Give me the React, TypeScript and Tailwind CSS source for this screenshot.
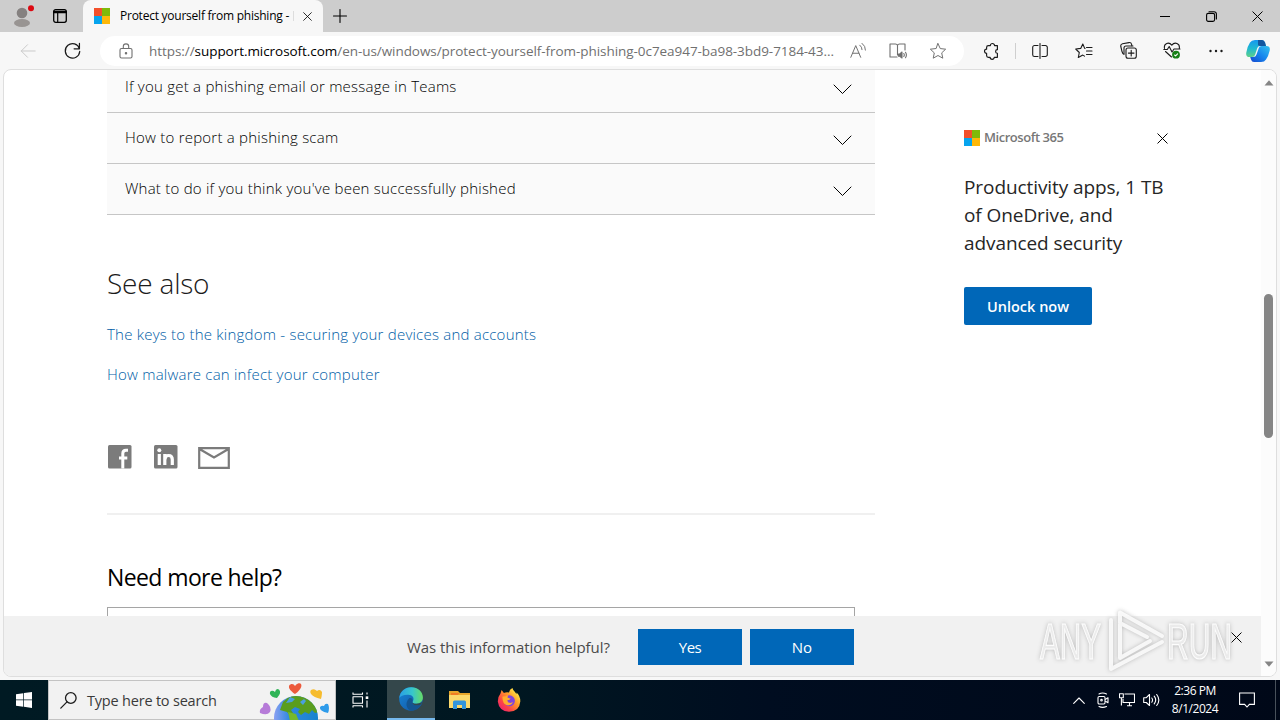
import React from "react";

type IconProps = { box?: string; className?: string; children: React.ReactNode };

function Icon({ box = "0 0 20 20", className = "size-5", children }: IconProps) {
  return (
    <svg
      viewBox={box}
      className={`shrink-0 ${className}`}
      fill="none"
      stroke="currentColor"
      strokeWidth="1.1"
      strokeLinecap="round"
      strokeLinejoin="round"
    >
      {children}
    </svg>
  );
}

function Slot({ className = "w-11", children }: { className?: string; children: React.ReactNode }) {
  return <div className={`flex h-full shrink-0 items-center justify-center ${className}`}>{children}</div>;
}

function MsLogo({ className = "size-4" }: { className?: string }) {
  return (
    <div className={`grid shrink-0 grid-cols-2 ${className}`}>
      <div className="bg-[#f3502b]" />
      <div className="bg-[#7fba0a]" />
      <div className="bg-[#06a4ee]" />
      <div className="bg-[#fdb80a]" />
    </div>
  );
}

function Close({ className = "size-[11px]" }: { className?: string }) {
  return (
    <Icon box="0 0 11 11" className={className}>
      <path d="M.8.8l9.4 9.4M10.2.8L.8 10.2" strokeWidth="1" />
    </Icon>
  );
}

function TabStrip() {
  return (
    <div className="flex h-8 shrink-0 items-center bg-[#cdcdcd] text-black">
      <Slot>
        <Icon box="0 0 24 24" className="mb-px size-6">
          <g stroke="none">
            <circle cx="12" cy="9" r="5.3" fill="#858180" />
            <ellipse cx="12" cy="19" rx="8" ry="4" fill="#989492" />
            <circle cx="21" cy="4.3" r="3" fill="#dc0912" />
          </g>
        </Icon>
      </Slot>
      <Slot className="w-8">
        <Icon box="0 0 14 14" className="size-[14px]">
          <rect x=".7" y=".7" width="12.6" height="12.6" rx="2" strokeWidth="1.3" />
          <path d="M1 3h12" strokeWidth="2.4" />
          <path d="M4.7 4v9" strokeWidth="1.2" />
        </Icon>
      </Slot>
      <div className="ml-[7px] flex h-8 w-[240px] items-center rounded-t-lg bg-[#f7f7f7] pl-[11px]">
        <MsLogo />
        <div className="ml-[10px] flex w-[174px] items-center justify-between text-[12px] tracking-[-0.24px] whitespace-nowrap">
          <span>Protect yourself from phishing -</span>
          <span className="h-[10px] w-px bg-[#dddddd]" />
        </div>
        <Slot className="w-[26px]">
          <Close className="size-[9px]" />
        </Slot>
      </div>
      <Slot className="w-[34px]">
        <Icon box="0 0 14 14" className="size-[14px]">
          <path d="M7 .5v13M.5 7h13" />
        </Icon>
      </Slot>
      <div className="ml-auto flex h-full">
        <Slot className="w-[46px]">
          <div className="h-px w-[10px] bg-black" />
        </Slot>
        <Slot className="w-[46px]">
          <Icon box="0 0 11 11" className="size-[11px]">
            <rect x=".6" y="2.4" width="8" height="8" rx="1.6" />
            <path d="M3 .7h5a2.4 2.4 0 0 1 2.4 2.4V8" />
          </Icon>
        </Slot>
        <Slot className="w-[46px]">
          <Close />
        </Slot>
      </div>
    </div>
  );
}

function Toolbar() {
  return (
    <div className="flex h-[37px] shrink-0 items-center pl-[6px] text-[#1b1b1b]">
      <Slot>
        <Icon className="size-[18px] text-[#c9c9c9]">
          <path d="M18 10H2.5M9.5 3L2.5 10l7 7" />
        </Icon>
      </Slot>
      <Slot>
        <Icon className="size-[19px]">
          <path d="M17.3 8.2A7.6 7.6 0 1 0 17.6 11M17.3 2.6v5.6h-5.6" strokeWidth="1.3" />
        </Icon>
      </Slot>
      <div className="ml-[6px] flex h-[30px] w-[864px] shrink-0 items-center rounded-full bg-white text-[#707070]">
        <Slot className="ml-3 w-7">
          <Icon box="0 0 14 16" className="h-4 w-[14px]">
            <rect x="1" y="5.5" width="12" height="9.5" rx="1.5" />
            <path d="M4.3 5.3V3.6a2.7 2.7 0 0 1 5.4 0v1.7" />
            <circle cx="7" cy="10.2" r=".7" fill="currentColor" />
          </Icon>
        </Slot>
        <div className="ml-[9px] w-[689px] pt-px text-[13.5px] tracking-[-0.055px] whitespace-nowrap">
          https://<span className="text-black">support.microsoft.com</span>
          /en-us/windows/protect-yourself-from-phishing-0c7ea947-ba98-3bd9-7184-43...
        </div>
        <Slot className="w-10">
          <Icon className="size-[18px]">
            <path d="M2 17L7.5 4 13 17M4 12.5h7M12 3.5q2.5 2 2.5 5M14.5 1.5q4 3 3.8 7.5" />
          </Icon>
        </Slot>
        <Slot className="w-10">
          <Icon box="0 0 18 16" className="h-4 w-[18px]">
            <path d="M8.5 12V2.2Q8 1 6.5 1H1v13h7M8.5 2.2Q9 1 10.5 1H16v6" />
            <path d="M9.5 11h1.3L13 9v6l-2.2-1.8H9.5z" fill="currentColor" />
            <path d="M14.8 10.5q1 1.5 0 3M16.5 9.3q1.8 2.7 0 5.4" />
          </Icon>
        </Slot>
        <Slot className="w-10">
          <Icon className="size-[18px]">
            <path d="M10 1.8l2.5 5.5 6 .7-4.4 4.1 1.2 5.9-5.3-3-5.3 3 1.2-5.9L1.5 8l6-.7z" />
          </Icon>
        </Slot>
      </div>
      <Slot className="ml-2 w-10">
        <Icon className="size-[18px]">
          <path
            d="M6 4h2.2a2.3 2.3 0 0 1 4.6 0H16v4.5a2 2 0 0 0 0 4V17h-3.5a2.3 2.3 0 0 1-4.6 0H6a2 2 0 0 1-2-2v-2.4a2.3 2.3 0 0 1 0-4.6V6a2 2 0 0 1 2-2z"
            strokeWidth="1.3"
          />
        </Icon>
      </Slot>
      <div className="ml-[3px] h-4 w-px shrink-0 bg-[#cfcfcf]" />
      <Slot className="ml-0.5 w-11">
        <Icon box="0 0 16 16" className="size-4">
          <path d="M6 2.5H2.5A1.8 1.8 0 0 0 .7 4.3v7.4a1.8 1.8 0 0 0 1.8 1.8H6M10 2.5h3.5a1.8 1.8 0 0 1 1.8 1.8v7.4a1.8 1.8 0 0 1-1.8 1.8H10M8 .5v15" />
        </Icon>
      </Slot>
      <Slot>
        <Icon box="0 0 18 16" className="h-4 w-[18px]">
          <path d="M10 5.4H9.7L7.8 1 5.7 5.4l-5 .6 3.6 3.5-1 5 4.5-2.4 1.7 1M11.5 4.5h5.5M11.5 8h5.5M11.5 11.5h5.5" />
        </Icon>
      </Slot>
      <Slot>
        <Icon box="0 0 17 17" className="size-[17px]">
          <rect x="6" y="6" width="10.3" height="10.3" rx="2" />
          <path d="M11.2 8.3v5.6M8.4 11.1H14M4 12.2C3 12 2.4 11 2 9.500L.8 4.5C.5 3 1.300 2.100 2.500 1.800l6.500-1.200c1.500-.2 2.300.5 2.600 1.700l.3 1.500" />
          <path d="M4 12V6q0-2 2-2h7" />
        </Icon>
      </Slot>
      <Slot>
        <Icon box="0 0 18 17" className="h-[17px] w-[18px]">
          <path d="M1.500 6.500C.5 1 6-.5 8.800 3.200 11.600-.5 17.200 1 16.300 6.500M.8 7.500h3.500L6.200 4.500 9 10l2-3h6M2.500 9.500L8.500 15" />
          <circle cx="13" cy="12.700" r="3.900" fill="#168016" stroke="none" />
          <path d="M11.600 13l1 .9 2-2" stroke="white" />
        </Icon>
      </Slot>
      <Slot>
        <Icon box="0 0 14 4" className="h-1 w-[14px]">
          <g fill="currentColor" stroke="none">
            <circle cx="1.500" cy="2" r="1.200" />
            <circle cx="7" cy="2" r="1.200" />
            <circle cx="12.500" cy="2" r="1.200" />
          </g>
        </Icon>
      </Slot>
      <Slot className="w-10">
        <Icon box="0 0 24 24" className="size-6">
          <defs>
            <linearGradient id="cpA" x1="0" y1="0" x2="0" y2="1">
              <stop offset="0" stopColor="#1697f0" />
              <stop offset=".5" stopColor="#20b9d0" />
              <stop offset="1" stopColor="#5fd089" />
            </linearGradient>
            <linearGradient id="cpB" x1="1" y1="0" x2="0" y2="1">
              <stop offset="0" stopColor="#35c3ee" />
              <stop offset=".5" stopColor="#1687ee" />
              <stop offset="1" stopColor="#1547cf" />
            </linearGradient>
          </defs>
          <g stroke="none">
            <path d="M9 1h7q2.200 0 3 2.500l1 3.500h-6q-2 0-2.700 2L9 16q-.8 2-3 2H3.500Q-.5 18 .3 13.500 1.500 7 4 3.500 5.500 1 9 1z" fill="url(#cpA)" />
            <path d="M12 1h4q2.200 0 3 2.500l1 3.500h-6q-1.200 0-2-1z" fill="#14579f" />
            <path d="M15 23H8q-2.200 0-3-2.500L4.200 18H7q2.800 0 3.500-2.500L13 8.500Q13.700 7 15.500 7h5q4 0 3.200 4.500Q22.500 17 20 20.500 18.500 23 15 23z" fill="url(#cpB)" />
          </g>
        </Icon>
      </Slot>
    </div>
  );
}

function AccordionRow({ label }: { label: string }) {
  return (
    <div className="flex h-[51px] items-center justify-between border-b border-[#c6c6c6] bg-[#fafafa] pr-[23px] pl-[18px]">
      <span className="pb-0.5 text-[15px] font-light tracking-[0.23px] text-black">{label}</span>
      <Icon box="0 0 19 11" className="mt-1 h-[11px] w-[19px]">
        <path d="M1 1l8.500 8.500L18 1" strokeWidth="1" />
      </Icon>
    </div>
  );
}

function Article() {
  return (
    <main className="ml-[103px] flex w-[768px] shrink-0 flex-col">
      <div className="-mt-2">
        <AccordionRow label="If you get a phishing email or message in Teams" />
        <AccordionRow label="How to report a phishing scam" />
        <AccordionRow label="What to do if you think you've been successfully phished" />
      </div>
      <h2 className="mt-12 h-10 text-[28px] leading-10 font-light tracking-[-0.2px] text-[#1b1b1b]">See also</h2>
      <a className="mt-[21px] h-5 text-[15px] leading-5 font-light tracking-[0.22px] text-[#005da6]">
        The keys to the kingdom - securing your devices and accounts
      </a>
      <a className="mt-5 h-5 text-[15px] leading-5 font-light tracking-[0.22px] text-[#005da6]">
        How malware can infect your computer
      </a>
      <div className="mt-[61px] flex h-6 items-center text-[#7b7b7b]">
        <Icon box="0 0 24 24" className="ml-px size-6">
          <rect width="23.500" height="23.500" rx="1.500" fill="currentColor" stroke="none" />
          <path d="M14.800 23.500v-9.300M14.800 14V8.500q0-3.200 3.200-3.200h2M11 13h8.300" stroke="white" strokeWidth="3" strokeLinecap="butt" />
        </Icon>
        <Icon box="0 0 24 24" className="ml-[22px] size-6">
          <rect width="23.500" height="23.500" rx="1.500" fill="currentColor" stroke="none" />
          <path d="M5.300 9v11M10.800 9v11M11 14.500q0-4 3.600-4 3.700 0 3.700 4V20" stroke="white" strokeWidth="3.200" strokeLinecap="butt" />
          <circle cx="5.300" cy="5.200" r="2" fill="white" stroke="none" />
        </Icon>
        <Icon box="0 0 32 22" className="mt-px ml-[20px] h-[22px] w-8">
          <path d="M1.200 1.200h29.600v19.600H1.200zM1.500 2L16 10.500 30.500 2" strokeWidth="2.200" strokeLinejoin="miter" />
        </Icon>
      </div>
      <div className="mt-[44px] h-[3px] border-y border-[#f0f0f0] bg-[#e3e3e3]" />
      <h2 className="mt-[46px] h-8 text-[23px] leading-8 tracking-[-0.6px] text-black">Need more help?</h2>
      <div className="mt-[14px] h-10 w-[748px] shrink-0 border border-[#a5a5a5]" />
    </main>
  );
}

function Promo() {
  return (
    <aside className="ml-[89px] w-[204px] pt-[59px]">
      <div className="flex h-[18px] items-center">
        <MsLogo />
        <span className="ml-1 text-[13px] font-semibold tracking-[-0.45px] text-[#777]">Microsoft 365</span>
        <span className="ml-auto flex text-black">
          <Close />
        </span>
      </div>
      <p className="mt-[26px] text-[19px] leading-7 tracking-[-0.08px] whitespace-nowrap text-[#262626]">
        Productivity apps, 1 TB
        <br />
        of OneDrive, and
        <br />
        advanced security
      </p>
      <button className="mt-[30px] flex h-[38px] w-32 items-center justify-center rounded-[2px] bg-[#0067b8] pt-0.5 text-[14.5px] font-semibold text-white">
        Unlock now
      </button>
    </aside>
  );
}

function FeedbackBar() {
  return (
    <div className="flex h-[60px] shrink-0 items-center bg-[#f1f1f1]">
      <span className="ml-[403px] w-[231px] pt-0.5 text-[15px] font-medium tracking-[-0.05px] whitespace-nowrap text-[#4a4a4a]">
        Was this information helpful?
      </span>
      <button className="mt-[2px] h-9 w-[104px] bg-[#0067b8] text-[15px] font-medium tracking-[-0.5px] text-white">Yes</button>
      <button className="mt-[2px] ml-2 h-9 w-[104px] bg-[#0067b8] text-[15px] font-medium text-white">No</button>
      <span className="mr-[19px] mb-[17px] ml-auto flex text-black">
        <Close />
      </span>
    </div>
  );
}

function ScrollBar() {
  return (
    <div className="flex w-[15px] shrink-0 flex-col items-center bg-[#fcfcfc] text-[#858585]">
      <Icon box="0 0 10 6" className="mt-[10px] h-[6px] w-[10px]">
        <path d="M5 .3L9.500 5.500h-9z" fill="currentColor" stroke="none" />
      </Icon>
      <div className="mt-[208px] h-[144px] w-[9px] rounded-full bg-[#858585]" />
      <Icon box="0 0 10 6" className="mt-auto mb-[9px] h-[6px] w-[10px]">
        <path d="M5 5.700L.5.500h9z" fill="currentColor" stroke="none" />
      </Icon>
    </div>
  );
}

function Watermark() {
  return (
    <svg
      viewBox="0 0 204 66"
      className="absolute top-[608px] left-[1036px] h-[66px] w-[204px] opacity-90 drop-shadow-[0_0_2px_#aaaaaa]"
      fill="none"
      stroke="white"
    >
      <g fontFamily="Liberation Sans Narrow, Liberation Sans, sans-serif" fontSize="50" fill="#f7f7f7" fillOpacity=".75" strokeWidth="1.200">
        <text x="4" y="51" textLength="61" lengthAdjust="spacingAndGlyphs">ANY</text>
        <text x="131" y="51" textLength="65" lengthAdjust="spacingAndGlyphs">RUN</text>
      </g>
      <path d="M84 15L84 4.500 126 28M84 15V50L114 33M75 12V61L126 34M84 15L111 29" strokeWidth="4" strokeLinejoin="round" strokeLinecap="round" opacity=".85" />
    </svg>
  );
}

function SearchArt() {
  return (
    <Icon box="0 0 76 39" className="h-[39px] w-[76px]">
      <defs>
        <linearGradient id="sea" x1="0" x2="1">
          <stop offset="0" stopColor="#8aa0f2" />
          <stop offset=".35" stopColor="#3188e0" />
          <stop offset="1" stopColor="#1683cc" />
        </linearGradient>
        <clipPath id="globe">
          <circle cx="37" cy="37" r="22" />
        </clipPath>
      </defs>
      <g stroke="none">
        <circle cx="37" cy="37" r="22" fill="url(#sea)" />
        <g clipPath="url(#globe)" fill="#5a9d1d">
          <path d="M24 21q6-7 15-7 9 0 17 8l4 9-4 1-3-3-3 4-4-2-4 3-3-3 2-3-5-2-4 3 4 6-4 1-4-5-7-2z" />
          <path d="M29 31l8 2 3 7H31z" fill="#76b82c" />
          <path d="M31 16l5 2-3 3-6 1zM41 21l4-3 2 2-3 4z" fill="#4aa0dd" />
        </g>
        <path d="M36 13C27 7 30 3 33 3q2 0 3 2 1-2 3-2.500C44 1 44 8 36 13z" fill="#ec5a3d" />
        <path d="M18 17C10 16 10 11 12 10q2-1 4 1 1-4 4-2.500 3 3-2 8.500z" fill="#30b457" />
        <path d="M62 18c-10-2-12-7-10-9 3-2 5 0 6 1 2-2 4-1 5 1 0 4-1 7-1 7z" fill="#f6bc2e" />
        <path d="M1 32Q0 28 4 26q0-5 4-4 5 4 3 9-3 4-10 1z" fill="#b67bd8" />
        <path d="M69 32q-9-2-8-6 2-2 4-1 1-3 4-2 2 4 0 9z" fill="#2e9bea" />
      </g>
    </Icon>
  );
}

function EdgeLogo() {
  return (
    <Icon box="0 0 24 24" className="size-6">
      <defs>
        <linearGradient id="edT" x1="0" x2="1">
          <stop offset="0" stopColor="#299fe6" />
          <stop offset=".55" stopColor="#37c6cc" />
          <stop offset="1" stopColor="#67dc65" />
        </linearGradient>
        <linearGradient id="edB" x1="0" y1="0" x2="1" y2="1">
          <stop offset="0" stopColor="#1687d8" />
          <stop offset="1" stopColor="#14529f" />
        </linearGradient>
      </defs>
      <g stroke="none">
        <circle cx="12" cy="12" r="11.800" fill="url(#edB)" />
        <path d="M.3 11C1 4.500 6 .2 12.300.2 19 .2 23.900 5 23.900 10.500c0 4-3.200 6.300-6.600 6.300-3.300 0-4.300-1.300-3.600-2.200 2.300-3.500-.5-6.800-4.200-6.800C4.800 7.500 1.500 9 .3 11z" fill="url(#edT)" />
        <path d="M13.500 14.700c-.7 2 1.200 3.600 4.200 3.600 2 0 3.700-.5 4.600-1-3 5-7 6.500-10 6.400C7.500 22.500 5.500 16 10 11.500c2-1.300 4.300.8 3.500 3.200z" fill="#145591" />
        <path d="M13.500 14.700c-.7 2 1.200 3.600 4.200 3.600 2 0 3.700-.5 4.600-1l.8-2.200c-1.500 1.300-3.500 1.700-5.800 1.700-3.300 0-4.300-1.300-3.800-2.100z" fill="#34474b" />
      </g>
    </Icon>
  );
}

function FolderLogo() {
  return (
    <Icon box="0 0 23 20" className="h-5 w-[23px]">
      <g stroke="none">
        <path d="M1 1h9l2 2h10v15H1z" fill="#e7a62b" />
        <path d="M3 3h8l-1 2H3z" fill="#f07b25" />
        <path d="M1 5h21v13H1z" fill="#fbd96c" />
        <path d="M5 19v-7q0-1.500 1.500-1.500h10Q18 10.500 18 12v7h-4v-4H9v4z" fill="#3295dc" />
      </g>
    </Icon>
  );
}

function FirefoxLogo() {
  return (
    <Icon box="0 0 24 24" className="size-6">
      <defs>
        <linearGradient id="ffx" x1="1" y1="0" x2="0" y2="1">
          <stop offset=".1" stopColor="#fff34d" />
          <stop offset=".4" stopColor="#ff9c28" />
          <stop offset=".7" stopColor="#fb4148" />
          <stop offset="1" stopColor="#e51583" />
        </linearGradient>
      </defs>
      <g stroke="none">
        <path d="M3.500 5.500L4.600 2l2.300 3Q9 4 12 4.500q.5-3 3.400-4.400Q16 2.500 18 4l1.500 2.200V4.500Q23.400 8 23.300 13.500 22.500 23.500 12 23.700 2 23.300.8 13.500.8 8.500 3.500 5.500z" fill="url(#ffx)" />
        <circle cx="12.400" cy="12.800" r="5.500" fill="#8044dc" />
        <path d="M5.500 8.500q3 .2 5.500-1.500l-.4 2.800 3 .7q-.9 1.800-3.400 1.800.4 2.700 3.300 2.600 1.500-.2 2.500-.9-2 4-6 3.200Q5 15.500 5.500 8.500z" fill="#ffad2c" />
      </g>
    </Icon>
  );
}

function Taskbar() {
  return (
    <div className="flex h-10 shrink-0 bg-[linear-gradient(90deg,#001a23_0%,#001721_40%,#000d20_60%,#000818_100%)] text-white">
      <Slot className="w-12">
        <Icon box="0 0 16 16" className="size-4">
          <path d="M0 2.200l7.300-1v6.300H0zM8 1.100L16 0v7.500H8zM0 8.300h7.300v6.400L0 13.700zM8 8.300h8V16l-8-1.200z" fill="white" stroke="none" />
        </Icon>
      </Slot>
      <div className="flex w-72 shrink-0 items-center border border-[#c3c3c3] bg-[#f2f2f2] text-[#1c1c1c]">
        <Icon box="0 0 17 17" className="ml-[11px] size-[17px]">
          <circle cx="10.800" cy="6" r="5.300" strokeWidth="1.300" />
          <path d="M7 9.900L.8 16.100" strokeWidth="1.300" />
        </Icon>
        <span className="ml-[10px] w-[174px] pt-0.5 text-[14.5px] tracking-[-0.2px] text-[#3a3a3a]">
          Type here to search
        </span>
        <SearchArt />
      </div>
      <Slot className="w-[51px] pr-[3px]">
        <Icon box="0 0 17 16" className="h-4 w-[17px]">
          <path d="M1 .5v1.800h9.500V.5M1 4.700h9.500v6.600H1zM1 15.500v-1.800h9.500v1.800M15 .5v2M15 8.500v7M15 4.800v1.400" strokeLinecap="butt" />
          <path d="M13.700 4.400h2.600V7h-2.600z" fill="white" stroke="none" />
        </Icon>
      </Slot>
      <Slot className="w-12 border-b-2 border-[#76b9ed] bg-[#34474b]">
        <EdgeLogo />
      </Slot>
      <Slot className="w-[49px]">
        <FolderLogo />
      </Slot>
      <Slot className="w-[49px]">
        <FirefoxLogo />
      </Slot>
      <div className="ml-auto flex h-full">
        <Slot className="w-6">
          <Icon box="0 0 12 7" className="h-[7px] w-3">
            <path d="M.7 6.300L6 1l5.300 5.300" />
          </Icon>
        </Slot>
        <Slot className="w-6">
          <Icon box="0 0 12 16" className="h-4 w-3">
            <rect x="1" y="4.500" width="7" height="7.500" rx="1.200" />
            <path d="M8.500 7.300l2.500-1.500v5L8.500 9.300M2 2q3.500-2 7.500 0M2 14.500q3.500 1.700 7.500 0" />
            <circle cx="4.500" cy="8.200" r=".8" />
          </Icon>
        </Slot>
        <Slot className="w-6">
          <Icon box="0 0 16 14" className="h-[14px] w-4">
            <path d="M5.500 1h10v8.500H4V6M8 12.800h5M10.500 9.500V13M.5.800h3.800v4H.5zM2.400 5v7.500" strokeLinecap="butt" />
          </Icon>
        </Slot>
        <Slot className="w-6">
          <Icon box="0 0 17 14" className="h-[14px] w-[17px]">
            <path d="M.7 4.700h2.600L6.500 1.500v11L3.300 9.500H.7zM8.800 5q1.500 2 0 4.200M11.200 3.200q3 3.800 0 7.600M13.700 1.500q4.300 5.500 0 11" />
          </Icon>
        </Slot>
        <div className="flex w-[64px] flex-col items-center justify-center text-[12px] leading-[18px] tracking-[-0.45px]">
          <span>2:36 PM</span>
          <span>8/1/2024</span>
        </div>
        <Slot className="w-10">
          <Icon box="0 0 16 16" className="size-4">
            <path d="M.6 1h14.800v11.400h-5L8 15l-2.400-2.600h-5z" strokeLinejoin="miter" />
          </Icon>
        </Slot>
        <div className="ml-2 w-[5px] border-l border-[#48515b]" />
      </div>
    </div>
  );
}

export default function App() {
  return (
    <div className="relative flex h-[720px] w-[1280px] flex-col overflow-hidden bg-[#f7f7f7] font-['Open_Sans','Noto_Sans',sans-serif]">
      <TabStrip />
      <Toolbar />
      <div className="mx-[3px] mb-[3px] flex min-h-0 flex-1 overflow-hidden rounded-lg border border-[#dedede] bg-white">
        <div className="flex min-w-0 flex-1 flex-col">
          <div className="flex min-h-0 flex-1 overflow-hidden">
            <Article />
            <Promo />
          </div>
          <FeedbackBar />
        </div>
        <ScrollBar />
      </div>
      <Taskbar />
      <Watermark />
    </div>
  );
}
